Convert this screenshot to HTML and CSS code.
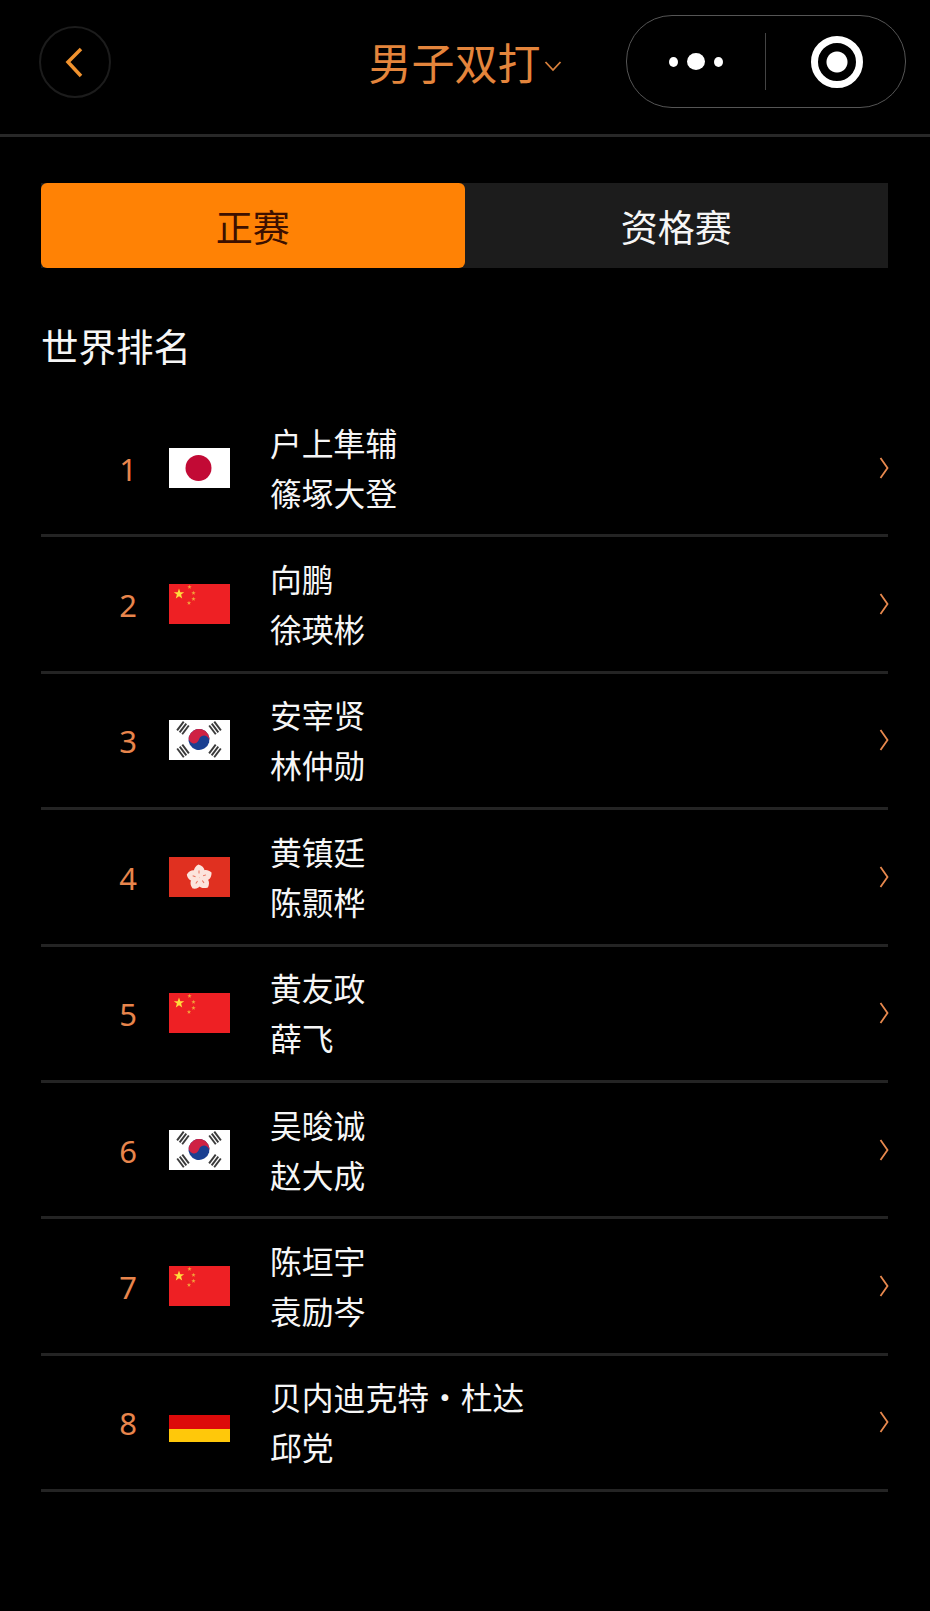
FILE: index.html
```html
<!DOCTYPE html>
<html lang="zh-CN">
<head>
    <meta charset="UTF-8">
    <meta name="viewport" content="width=device-width, initial-scale=1.0">
    <title>男子双打</title>
    <link rel="stylesheet" href="styles.css">
</head>
<body>
    <!-- 旗帜图形，下面的列表重复引用 -->
    <svg class="defs">
        <defs>
            <polygon id="star" points="0,-5.5 1.3,-1.7 5.2,-1.7 2.1,0.6 3.2,4.4 0,2.2 -3.2,4.4 -2.1,0.6 -5.2,-1.7 -1.3,-1.7"/>
            <g id="petal">
                <path d="M0 0C-7.5 -3 -7 -10 -1 -13C6 -11 7.5 -4 1 -1Z" fill="#fce4dc"/>
                <path d="M-0.5 -4L-0.5 -7" stroke="#e8705c" stroke-width="1"/>
            </g>
            <g id="bars">
                <rect x="-5.5" y="-4.2" width="11" height="1.9"/>
                <rect x="-5.5" y="-1" width="11" height="1.9"/>
                <rect x="-5.5" y="2.2" width="11" height="1.9"/>
            </g>
        </defs>
        <symbol id="flag-jp" viewBox="0 0 61 40">
            <rect width="61" height="40" fill="#fff"/>
            <circle cx="29.5" cy="20" r="13" fill="#c20a35"/>
        </symbol>
        <symbol id="flag-cn" viewBox="0 0 61 40">
            <rect width="61" height="40" fill="#ee2024"/>
            <use href="#star" transform="translate(10 10)" fill="#ffdc3c"/>
            <g fill="#f2a23a">
                <use href="#star" transform="translate(20.5 3) scale(.42)"/>
                <use href="#star" transform="translate(24.5 9) scale(.42)"/>
                <use href="#star" transform="translate(24.5 15) scale(.42)"/>
                <use href="#star" transform="translate(20 19) scale(.42)"/>
            </g>
        </symbol>
        <symbol id="flag-kr" viewBox="0 0 61 40">
            <rect width="61" height="40" fill="#fff"/>
            <g fill="#3a3a3a">
                <use href="#bars" transform="translate(14 8) rotate(-53)"/>
                <use href="#bars" transform="translate(46 8) rotate(53)"/>
                <use href="#bars" transform="translate(14 31) rotate(53)"/>
                <use href="#bars" transform="translate(46 31) rotate(-53)"/>
            </g>
            <g transform="translate(30 19.5) rotate(15)">
                <circle r="10.5" fill="#1a3f92"/>
                <path d="M-10.5 0A10.5 10.5 0 0 1 10.5 0A5.25 5.25 0 0 0 0 0A5.25 5.25 0 0 1 -10.5 0Z" fill="#cf2244"/>
            </g>
        </symbol>
        <symbol id="flag-hk" viewBox="0 0 61 40">
            <rect width="61" height="40" fill="#e03020"/>
            <g transform="translate(30.5 20.5)">
                <use href="#petal"/>
                <use href="#petal" transform="rotate(72)"/>
                <use href="#petal" transform="rotate(144)"/>
                <use href="#petal" transform="rotate(216)"/>
                <use href="#petal" transform="rotate(288)"/>
            </g>
        </symbol>
        <symbol id="flag-de" viewBox="0 0 61 40">
            <rect width="61" height="13" fill="#000"/>
            <rect y="13" width="61" height="14" fill="#dd0a0a"/>
            <rect y="27" width="61" height="13" fill="#ffc80a"/>
        </symbol>
        <symbol id="arrow" viewBox="0 0 10 24">
            <path d="M1.5 2L8.5 12L1.5 22" fill="none" stroke="#e8894e" stroke-width="1.8"/>
        </symbol>
    </svg>

    <header class="top-bar">
        <div class="back-btn">
            <svg width="20" height="32" viewBox="0 0 20 32"><path d="M16 3L3 16L16 30" fill="none" stroke="#f0922e" stroke-width="3.5"/></svg>
        </div>
        <div class="page-title">男子双打<svg class="title-arrow" width="18" height="12" viewBox="0 0 18 12"><path d="M1.5 2L9 10L16.5 2" fill="none" stroke="#d9803c" stroke-width="1.8"/></svg></div>
        <div class="capsule">
            <div class="capsule-dots">
                <span class="dot"></span>
                <span class="dot dot-big"></span>
                <span class="dot"></span>
            </div>
            <div class="capsule-line"></div>
            <div class="capsule-target"></div>
        </div>
    </header>

    <main class="content">
        <div class="tabs">
            <div class="tab tab-on">正赛</div>
            <div class="tab">资格赛</div>
        </div>

        <h2 class="section-title">世界排名</h2>

        <ul class="rank-list">
            <li class="rank-row">
                <span class="rank-num">1</span>
                <svg class="flag"><use href="#flag-jp"/></svg>
                <div class="names"><div>户上隼辅</div><div>篠塚大登</div></div>
                <svg class="row-arrow"><use href="#arrow"/></svg>
            </li>
            <li class="rank-row">
                <span class="rank-num">2</span>
                <svg class="flag"><use href="#flag-cn"/></svg>
                <div class="names"><div>向鹏</div><div>徐瑛彬</div></div>
                <svg class="row-arrow"><use href="#arrow"/></svg>
            </li>
            <li class="rank-row">
                <span class="rank-num">3</span>
                <svg class="flag"><use href="#flag-kr"/></svg>
                <div class="names"><div>安宰贤</div><div>林仲勋</div></div>
                <svg class="row-arrow"><use href="#arrow"/></svg>
            </li>
            <li class="rank-row">
                <span class="rank-num">4</span>
                <svg class="flag"><use href="#flag-hk"/></svg>
                <div class="names"><div>黄镇廷</div><div>陈颢桦</div></div>
                <svg class="row-arrow"><use href="#arrow"/></svg>
            </li>
            <li class="rank-row">
                <span class="rank-num">5</span>
                <svg class="flag"><use href="#flag-cn"/></svg>
                <div class="names"><div>黄友政</div><div>薛飞</div></div>
                <svg class="row-arrow"><use href="#arrow"/></svg>
            </li>
            <li class="rank-row">
                <span class="rank-num">6</span>
                <svg class="flag"><use href="#flag-kr"/></svg>
                <div class="names"><div>吴晙诚</div><div>赵大成</div></div>
                <svg class="row-arrow"><use href="#arrow"/></svg>
            </li>
            <li class="rank-row">
                <span class="rank-num">7</span>
                <svg class="flag"><use href="#flag-cn"/></svg>
                <div class="names"><div>陈垣宇</div><div>袁励岑</div></div>
                <svg class="row-arrow"><use href="#arrow"/></svg>
            </li>
            <li class="rank-row">
                <span class="rank-num">8</span>
                <svg class="flag"><use href="#flag-de"/></svg>
                <div class="names"><div>贝内迪克特・杜达</div><div>邱党</div></div>
                <svg class="row-arrow"><use href="#arrow"/></svg>
            </li>
        </ul>
    </main>
</body>
</html>
```

FILE: styles.css
```css
* {
    box-sizing: border-box;
}
body {
    margin: 0;
    height: 1611px;
    overflow: hidden;
    background-color: #000;
    color: #f6f6f6;
    font-family: "Noto Sans CJK SC", "Noto Sans", sans-serif;
}
.defs {
    display: none;
}

/* 顶部导航 */
.top-bar {
    display: grid;
    grid-template-columns: 1fr auto 1fr;
    align-items: center;
    height: 137px;
    padding: 15px 24px 30px;
    border-bottom: 3px solid #282828;
}
.back-btn {
    display: flex;
    align-items: center;
    justify-content: center;
    width: 72px;
    height: 72px;
    margin-left: 15px;
    border: 2px solid #1c1c1c;
    border-radius: 50%;
}
.page-title {
    display: flex;
    align-items: center;
    margin-top: -1px;
    color: #e4853c;
    font-size: 43px;
    line-height: 50px;
}
.title-arrow {
    margin: 9px 0 0 3px;
}
.capsule {
    justify-self: end;
    display: flex;
    align-items: center;
    width: 280px;
    height: 93px;
    border: 1px solid #555;
    border-radius: 46px;
}
.capsule-dots {
    display: flex;
    align-items: center;
    justify-content: center;
    gap: 9px;
    width: 138px;
}
.dot {
    width: 9px;
    height: 10px;
    border-radius: 50%;
    background: #fff;
}
.dot-big {
    width: 18px;
    height: 17px;
}
.capsule-line {
    width: 1px;
    height: 57px;
    background: #444;
}
.capsule-target {
    width: 52px;
    height: 52px;
    margin-left: 45px;
    border: 7px solid #fff;
    border-radius: 50%;
    background: radial-gradient(circle, #fff 0 10px, #000 11px);
}

/* 切换标签 */
.content {
    padding: 46px 42px 0 41px;
}
.tabs {
    display: flex;
    height: 85px;
    background: #1c1c1c;
}
.tab {
    flex: 1;
    display: flex;
    align-items: center;
    justify-content: center;
    font-size: 37px;
}
.tab-on {
    border-radius: 6px;
    background: #ff8205;
    color: #3d1000;
}

.section-title {
    margin: 52px 0 31px;
    font-size: 37.5px;
    font-weight: 400;
    line-height: 50px;
}

/* 排名列表 */
.rank-list {
    margin: 0;
    padding: 0;
    list-style-type: none;
}
.rank-row {
    display: flex;
    align-items: center;
    height: 136.4px;
    border-bottom: 3px solid #242424;
}
.rank-num {
    width: 34px;
    margin-left: 70px;
    padding-top: 2px;
    color: #e8854c;
    font-family: "Noto Sans", sans-serif;
    font-size: 31px;
    text-align: center;
}
.flag {
    width: 61px;
    height: 40px;
    margin-left: 24px;
}
.names {
    margin-top: -2px;
    margin-left: 40px;
    font-size: 31.8px;
    line-height: 50px;
}
.row-arrow {
    width: 10px;
    height: 24px;
    margin-left: auto;
    margin-right: -1px;
}
```
